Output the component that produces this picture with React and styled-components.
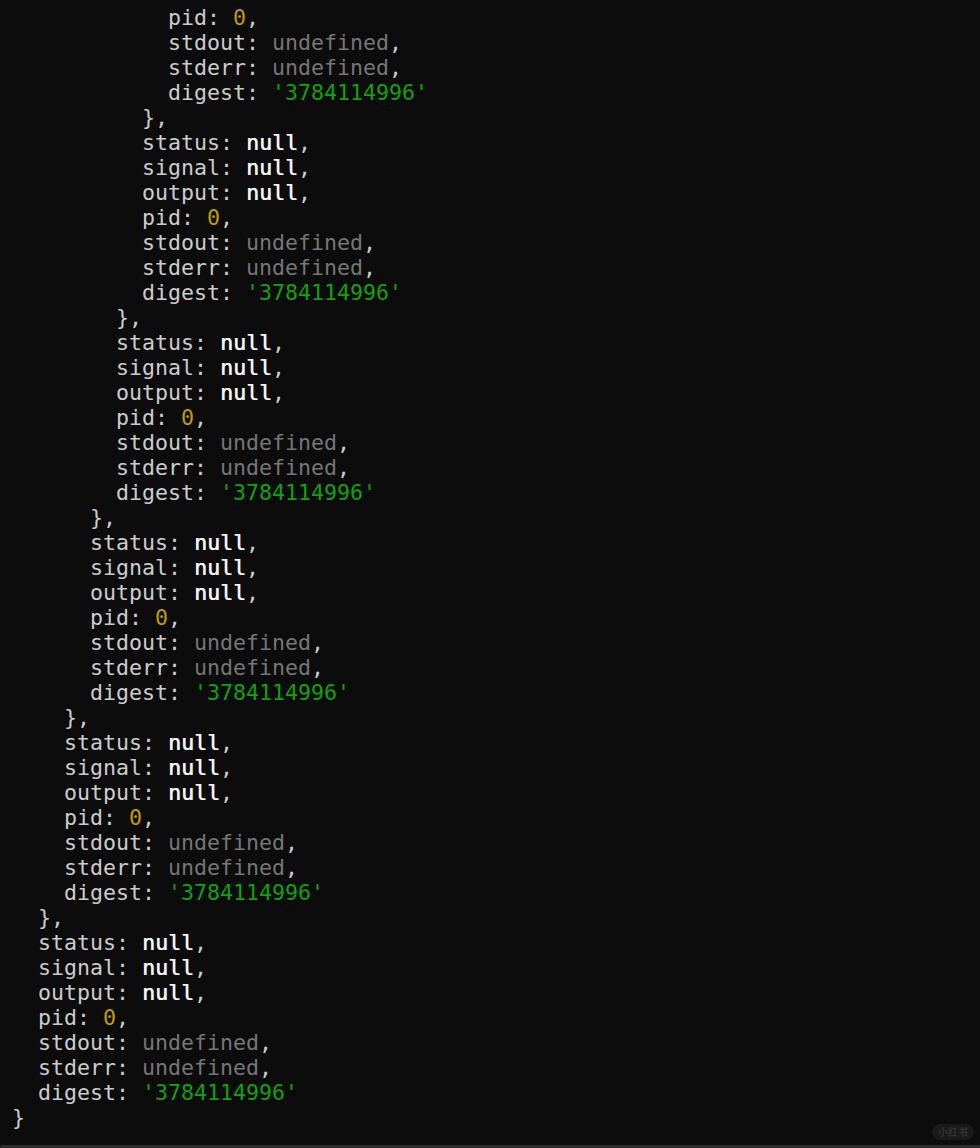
import React from "react";
import styled, { createGlobalStyle } from "styled-components";

const GlobalStyle = createGlobalStyle`
  html, body {
    margin: 0;
    padding: 0;
    background: #0c0c0c;
  }
`;

const Window = styled.div`
  position: relative;
  width: 980px;
  height: 1148px;
  background: #0c0c0c;
  overflow: hidden;
  display: flex;
  flex-direction: column;
`;

const Screen = styled.pre`
  flex: 1;
  margin: 0;
  padding: 5px 0 0 12px;
  font-family: "DejaVu Sans Mono", "Liberation Mono", monospace;
  font-size: 21.6px;
  line-height: 25px;
  color: #cccccc;
  overflow: hidden;
`;

const Line = styled.div`
  height: 25px;
  padding-left: ${(p) => p.$level * 26}px;
  white-space: pre;
`;

const colors = {
  key: "#cccccc",
  null: "#f2f2f2",
  num: "#c19c00",
  undef: "#767676",
  str: "#13a10e",
};

const Tok = styled.span`
  color: ${(p) => colors[p.$kind]};
  text-shadow: ${(p) => (p.$kind === "null" ? "0.5px 0 0 #f2f2f2" : "none")};
`;

const Frame = styled.div`
  height: 3px;
  background: #2c2c2c;
  border-top-left-radius: 6px;
`;

const Badge = styled.div`
  position: absolute;
  right: 6px;
  bottom: 8px;
  padding: 1px 6px;
  border-radius: 8px;
  background: #1a1a1a;
  color: #333333;
  font-family: "Noto Sans CJK SC", sans-serif;
  font-size: 10px;
  line-height: 14px;
  font-weight: bold;
`;

const fields = [
  ["status", "null", "null"],
  ["signal", "null", "null"],
  ["output", "null", "null"],
  ["pid", "0", "num"],
  ["stdout", "undefined", "undef"],
  ["stderr", "undefined", "undef"],
  ["digest", "'3784114996'", "str"],
];

const buildLines = () => {
  const lines = [];
  fields.slice(3).forEach((f) => lines.push({ level: 6, field: f }));
  for (let level = 5; level >= 1; level--) {
    lines.push({ level, brace: "}," });
    fields.forEach((f) => lines.push({ level, field: f }));
  }
  lines.push({ level: 0, brace: "}" });
  return lines;
};

const Field = ({ field, last }) => {
  const [name, value, kind] = field;
  return (
    <>
      {name}: <Tok $kind={kind}>{value}</Tok>
      {last ? "" : ","}
    </>
  );
};

export default function App() {
  const lines = buildLines();
  return (
    <Window>
      <GlobalStyle />
      <Screen>
        {lines.map((l, i) => (
          <Line key={i} $level={l.level}>
            {l.brace ? l.brace : <Field field={l.field} last={l.field[0] === "digest"} />}
          </Line>
        ))}
      </Screen>
      <Frame />
      <Badge>小红书</Badge>
    </Window>
  );
}
